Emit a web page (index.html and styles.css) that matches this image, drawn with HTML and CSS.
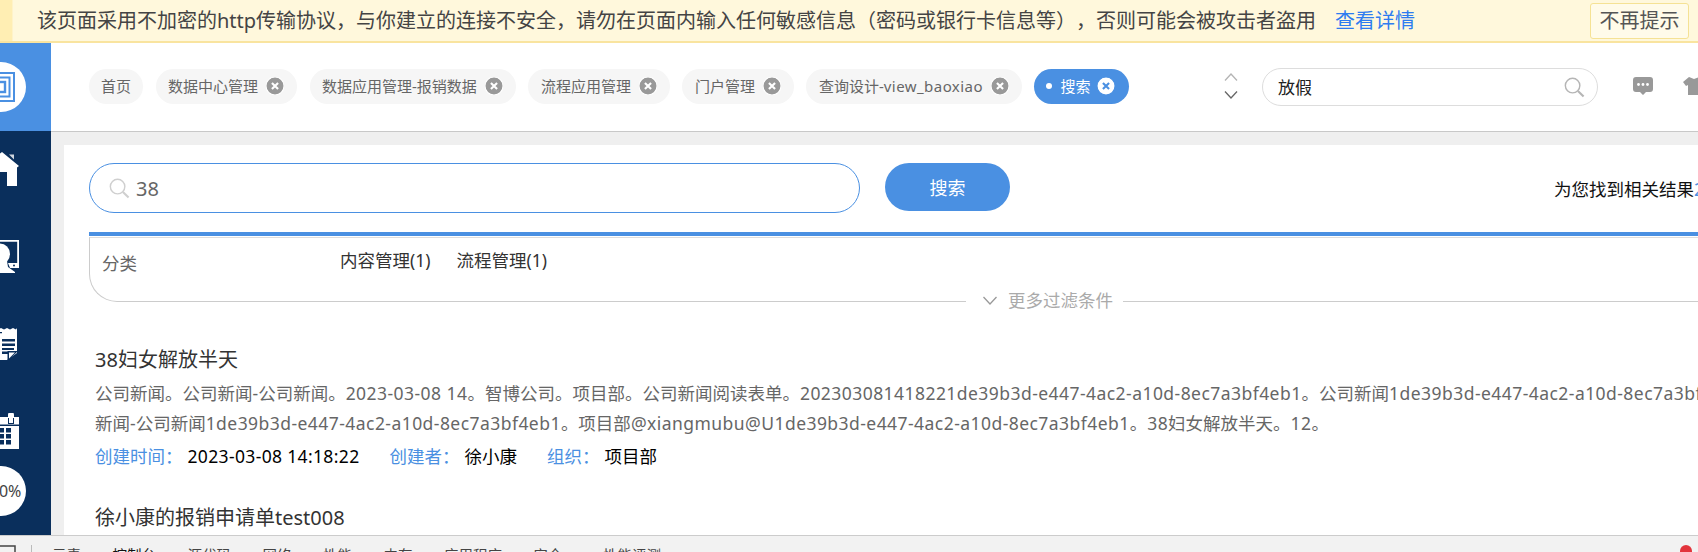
FILE: index.html
```html
<!DOCTYPE html>
<html lang="zh-CN">
<head>
<meta charset="utf-8">
<title>搜索</title>
<link rel="stylesheet" href="styles.css">
</head>
<body>
<svg class="defs" width="0" height="0" aria-hidden="true">
  <symbol id="close" viewBox="0 0 17 17"><circle cx="8.5" cy="8.5" r="8.5" fill="currentColor"/><path d="M5.6 5.6l5.8 5.8M11.4 5.6l-5.8 5.8" class="close-x"/></symbol>
  <symbol id="lens" viewBox="0 0 22 22"><circle cx="9" cy="9" r="7.6" fill="none" stroke="currentColor" stroke-width="1.5"/><path d="M14.6 14.6L20.5 20.5" stroke="currentColor" stroke-width="2.2" fill="none"/></symbol>
</svg>
<div class="banner">
  <span class="banner-strip"></span>
  <p class="banner-text">该页面采用不加密的http传输协议，与你建立的连接不安全，请勿在页面内输入任何敏感信息（密码或银行卡信息等），否则可能会被攻击者盗用</p>
  <a class="banner-link">查看详情</a>
  <button class="banner-btn">不再提示</button>
</div>
<div class="app">
  <aside class="sidebar">
    <div class="logo-area">
      <div class="logo-circle">
        <svg width="50" height="50" viewBox="0 0 50 50"><g fill="none" stroke="#4a90e2"><rect x="10" y="11" width="28" height="28" stroke-width="2"/><rect x="14.5" y="15.5" width="19" height="19" stroke-width="2"/><rect x="19" y="20" width="10" height="10" stroke-width="2.4"/></g></svg>
      </div>
    </div>
    <nav class="side-nav">
      <svg class="side-icon" viewBox="0 0 36 36"><path fill="#fff" d="M19 0L36 14L34 15.500V34H24V20H10V34H0V15Z"/><path fill="#0a2f5c" d="M24 1h8v7L24 2z"/><path fill="#cfd6df" d="M26 2.500h5v5z"/></svg>
      <svg class="side-icon" viewBox="0 0 36 36"><path fill="none" stroke="#fff" stroke-width="1.800" d="M8 1.900H35.100V28"/><ellipse cx="17" cy="15" rx="10" ry="10.500" fill="#fff"/><path fill="#fff" d="M0 22H24L25 28L32 33V34H0Z"/><path fill="#fff" d="M25 24H36V29H27z"/><circle cx="31" cy="26.500" r="1" fill="#0a2f5c"/></svg>
      <svg class="side-icon" viewBox="0 0 36 36"><path fill="#fff" d="M0 2l3 1.500 3-1.500 3 1.500 3-1.500 3 1.500 3-1.500 3 1.500 3-1.500 3 1.500 3-1.500 3 1.500 1-1.500v25L24 34H0z"/><path fill="#0a2f5c" d="M0 6h19v1.200H0zM19 13h13v2.400H19zM19 17.500h13v2.400H19zM19 22h12v2H19zM19 25.500h8v2.400H19z"/><path fill="#0a2f5c" d="M35 25L25.500 34h-1V25z"/><path fill="#fff" d="M26 26.500h6L26 32.500z"/></svg>
      <svg class="side-icon" viewBox="0 0 36 36"><path fill="#fff" d="M0 4h25V2a3 3 0 0 1 6 0v2h5v32H0z"/><path fill="#0a2f5c" d="M25 5h1v5h4V5h1v6h-6zM0 11.500h36v1.500H0z"/><path fill="#0a2f5c" d="M9 15h5v4.500H9zM16 15h5v4.500h-5zM23 15h5v4.500h-5zM9 21h5v4.500H9zM16 21h5v4.500h-5zM23 21h5v4.500h-5zM9 27h5v4.500H9zM16 27h5v4.500h-5zM23 27h5v4.500h-5z"/></svg>
      <div class="progress"><span>100%</span></div>
    </nav>
  </aside>
  <main class="main">
    <header class="topbar">
      <div class="tabs">
        <span class="tab tab-home"><span class="tab-label">首页</span></span>
        <span class="tab"><span class="tab-label">数据中心管理</span><svg class="tab-x"><use href="#close"/></svg></span>
        <span class="tab"><span class="tab-label">数据应用管理-报销数据</span><svg class="tab-x"><use href="#close"/></svg></span>
        <span class="tab"><span class="tab-label">流程应用管理</span><svg class="tab-x"><use href="#close"/></svg></span>
        <span class="tab"><span class="tab-label">门户管理</span><svg class="tab-x"><use href="#close"/></svg></span>
        <span class="tab"><span class="tab-label">查询设计-<span class="lat">view_baoxiao</span></span><svg class="tab-x"><use href="#close"/></svg></span>
        <span class="tab tab-active"><i class="tab-dot"></i><span class="tab-label">搜索</span><svg class="tab-x"><use href="#close"/></svg></span>
      </div>
      <div class="scroller">
        <svg width="14" height="8" viewBox="0 0 14 8"><path d="M1 7.500L7 1l6 6.500" fill="none" stroke="#b4b4b4" stroke-width="1.300"/></svg>
        <svg width="14" height="8" viewBox="0 0 14 8"><path d="M1 .5L7 7l6-6.500" fill="none" stroke="#666" stroke-width="1.300"/></svg>
      </div>
      <div class="top-search">
        <span class="top-search-text">放假</span>
        <svg class="top-search-icon"><use href="#lens"/></svg>
      </div>
      <svg class="msg-icon" width="20" height="18" viewBox="0 0 20 18"><path fill="#999" d="M3 0h14a3 3 0 0 1 3 3v9a3 3 0 0 1-3 3h-4l-3 3-3-3H3a3 3 0 0 1-3-3V3a3 3 0 0 1 3-3z"/><circle cx="5.500" cy="7.500" r="1.400" fill="#fff"/><circle cx="10" cy="7.500" r="1.400" fill="#fff"/><circle cx="14.500" cy="7.500" r="1.400" fill="#fff"/></svg>
      <svg class="shirt-icon" width="22" height="18" viewBox="0 0 22 18"><path fill="#999" d="M6 0l5 2 5-2 6 5-3 4-2-1v10H5V8L3 9 0 5z"/></svg>
    </header>
    <section class="canvas">
      <div class="card">
        <div class="search-row">
          <div class="search-box">
            <svg class="search-box-icon"><use href="#lens"/></svg>
            <span class="search-box-text">38</span>
          </div>
          <button class="search-btn">搜索</button>
          <span class="found">为您找到相关结果<b class="found-num">2</b>条</span>
        </div>
        <div class="filter">
          <div class="filter-box">
            <span class="filter-label">分类</span>
            <span class="filter-val">内容管理(1)</span>
            <span class="filter-val">流程管理(1)</span>
            <div class="more">
              <svg width="14" height="9" viewBox="0 0 14 9"><path d="M.5 1L7 8l6.500-7" fill="none" stroke="#999" stroke-width="1.300"/></svg>
              <span>更多过滤条件</span>
            </div>
          </div>
        </div>
        <article class="result">
          <h3 class="result-title">38妇女解放半天</h3>
          <p class="result-desc">公司新闻。公司新闻-公司新闻。<span class="lat">2023-03-08 14</span>。智博公司。项目部。公司新闻阅读表单。<span class="lat">202303081418221de39b3d-e447-4ac2-a10d-8ec7a3bf4eb1</span>。公司新闻<span class="lat">1de39b3d-e447-4ac2-a10d-8ec7a3bf4eb1</span>。公司</p>
          <p class="result-desc">新闻-公司新闻<span class="lat">1de39b3d-e447-4ac2-a10d-8ec7a3bf4eb1</span>。项目部<span class="lat">@xiangmubu@U1de39b3d-e447-4ac2-a10d-8ec7a3bf4eb1</span>。<span class="lat">38</span>妇女解放半天。<span class="lat">12</span>。</p>
          <div class="meta">
            <span class="meta-key">创建时间：</span><span class="meta-val lat-date">2023-03-08 14:18:22</span>
            <span class="meta-key">创建者：</span><span class="meta-val">徐小康</span>
            <span class="meta-key">组织：</span><span class="meta-val">项目部</span>
          </div>
        </article>
        <article class="result">
          <h3 class="result-title">徐小康的报销申请单test008</h3>
        </article>
      </div>
    </section>
  </main>
</div>
<footer class="devtools">
  <svg class="dev-icon" width="16" height="14" viewBox="0 0 16 14"><path d="M0 1h15v13" fill="none" stroke="#444" stroke-width="1.500"/></svg>
  <i class="dev-sep"></i>
  <span class="dev-tab">元素</span>
  <span class="dev-tab dev-tab-on">控制台</span>
  <span class="dev-tab">源代码</span>
  <span class="dev-tab">网络</span>
  <span class="dev-tab">性能</span>
  <span class="dev-tab">内存</span>
  <span class="dev-tab">应用程序</span>
  <span class="dev-tab">安全</span>
  <span class="dev-tab dev-tab-last">性能评测</span>
  <i class="dev-alert"></i>
</footer>
</body>
</html>
```

FILE: styles.css
```css
* { box-sizing: border-box; }
html, body { margin: 0; padding: 0; }
body {
  width: 1698px;
  height: 552px;
  overflow: hidden;
  background: #fff;
  color: #333;
  font-family: "Noto Sans", "Noto Sans CJK SC", sans-serif;
  text-spacing-trim: space-all;
  display: flex;
  flex-direction: column;
}
.defs { position: absolute; }
p, h3 { margin: 0; font-weight: 400; }
.lat { letter-spacing: .45px; }
.lat-date { letter-spacing: .35px; }

/* security banner */
.banner {
  flex: 0 0 43px;
  display: flex;
  align-items: center;
  background: #fff8dc;
  border-bottom: 2px solid #f9e49f;
  font-size: 20px;
  line-height: 28px;
  color: #444;
  white-space: nowrap;
}
.banner-strip {
  width: 13px;
  height: 100%;
  background: #ffeeb3;
  border-right: 1px solid #fff3c9;
}
.banner-text { margin-left: 24px; }
.banner-link { margin-left: 19px; color: #2e7cf0; }
.banner-btn {
  margin-left: auto;
  margin-right: 9px;
  width: 99px;
  height: 36px;
  padding: 0;
  font: inherit;
  color: #555;
  background: #fffbe9;
  border: 1px solid #f5e294;
  border-radius: 3px;
}

.app { flex: 0 0 492px; display: flex; min-height: 0; }

/* left rail */
.sidebar {
  flex: 0 0 51px;
  background: #0a2f5c;
  overflow: hidden;
  display: flex;
  flex-direction: column;
}
.logo-area {
  flex: 0 0 88px;
  background: #4a90e2;
  display: flex;
  align-items: center;
  justify-content: flex-end;
  padding-right: 25px;
}
.logo-circle {
  flex: 0 0 50px;
  width: 50px;
  height: 50px;
  border-radius: 50%;
  background: #fff;
  overflow: hidden;
}
.logo-circle svg { display: block; }
.side-nav {
  display: flex;
  flex-direction: column;
  align-items: flex-end;
  padding: 21px 32px 0 0;
}
.side-icon {
  flex: 0 0 36px;
  width: 36px;
  height: 36px;
  margin-bottom: 51px;
}
.side-icon:nth-child(4) { margin-bottom: 17px; }
.progress {
  flex: 0 0 50px;
  width: 50px;
  margin-right: -7px;
  border-radius: 50%;
  background: #fff;
  color: #444;
  font-size: 16px;
  white-space: nowrap;
  display: flex;
  align-items: center;
  justify-content: center;
}

.main {
  flex: 0 0 1647px;
  display: flex;
  flex-direction: column;
  overflow: hidden;
}

/* top bar */
.topbar {
  flex: 0 0 89px;
  display: flex;
  align-items: center;
  padding: 0 0 2px 38px;
  border-bottom: 1px solid #c8c8c8;
  overflow: hidden;
}
.tabs {
  flex: 0 0 1135px;
  display: flex;
  gap: 12.500px;
}
.tab {
  display: flex;
  align-items: center;
  height: 35px;
  padding: 0 13px 0 12.500px;
  border-radius: 17.500px;
  background: #f6f6f6;
  color: #666;
  font-size: 15px;
  white-space: nowrap;
}
.tab-label { padding-bottom: 2px; }
.tab-home { padding: 0 12px; }
.tab-x {
  flex: 0 0 18px;
  width: 18px;
  height: 18px;
  margin-left: 8px;
  color: #999;
  stroke: #fff;
}
.close-x { fill: none; stroke-width: 2; }
.tab-active { background: #4a90e2; color: #fff; padding: 0 14px 0 12px; }
.tab-active .tab-x { color: #fff; stroke: #4a90e2; margin-left: 7px; }
.tab-dot {
  width: 6px;
  height: 6px;
  margin-right: 8px;
  border-radius: 50%;
  background: #fff;
}
.scroller {
  flex: 0 0 14px;
  display: flex;
  flex-direction: column;
  gap: 10px;
}
.scroller svg { display: block; }
.top-search {
  flex: 0 0 336px;
  height: 38px;
  margin: 2px 0 0 24px;
  padding: 0 12px 0 15px;
  display: flex;
  align-items: center;
  justify-content: space-between;
  border: 1px solid #ddd;
  border-radius: 19px;
  color: #222;
  font-size: 17px;
}
.top-search-text { padding-bottom: 2px; }
.top-search-icon { width: 21px; height: 21px; color: #b5b5b5; }
.msg-icon { flex: 0 0 20px; margin-left: 35px; }
.shirt-icon { flex: 0 0 22px; margin-left: 30px; }

/* content */
.canvas {
  flex: 1 1 0;
  min-height: 0;
  background: #efefef;
  padding: 13px 0 0 13px;
  overflow: hidden;
}
.card {
  width: 1700px;
  height: 100%;
  background: #fff;
  padding: 18px 0 0 25px;
  overflow: hidden;
}
.search-row {
  display: flex;
  align-items: center;
  height: 50px;
  white-space: nowrap;
}
.search-box {
  flex: 0 0 771px;
  height: 50px;
  display: flex;
  align-items: center;
  padding-left: 19px;
  border: 1px solid #4a90e2;
  border-radius: 25px;
}
.search-box-icon { width: 21px; height: 21px; color: #cfcfcf; }
.search-box-text { margin-left: 6px; font-size: 20px; color: #666; }
.search-btn {
  flex: 0 0 125px;
  height: 48px;
  margin: 0 0 2px 25px;
  border: 0;
  border-radius: 24px;
  background: #4a90e2;
  color: #fff;
  font: inherit;
  font-size: 18px;
}
.found { margin-left: 544px; font-size: 17.500px; color: #111; }
.found-num { font-weight: 400; color: #4a90e2; }

.filter {
  margin-top: 19px;
  padding-top: 1px;
  border-top: 4px solid #4a90e2;
}
.filter-box {
  position: relative;
  height: 65px;
  display: flex;
  padding-left: 12px;
  border: solid #ccc;
  border-width: 1px 0 1px 1px;
  border-top-color: #ddd;
  border-bottom-left-radius: 28px;
  font-size: 17.500px;
  line-height: 26px;
  color: #333;
}
.filter-label { width: 238px; margin-top: 12px; color: #666; }
.filter-val { margin: 9px 26px 0 0; }
.more {
  position: absolute;
  left: 876px;
  bottom: -12px;
  width: 157px;
  height: 26px;
  padding-left: 17px;
  display: flex;
  align-items: center;
  gap: 11px;
  background: #fff;
  color: #aaa;
}

.result { padding-left: 6px; }
.filter + .result { margin-top: 43px; }
.result + .result { margin-top: 32px; }
.result-title { font-size: 20px; line-height: 30px; color: #333; white-space: nowrap; }
.result-desc {
  margin-top: 0;
  font-size: 17.500px;
  line-height: 30px;
  color: #666;
  white-space: nowrap;
}
.result-title + .result-desc { margin-top: 3px; }
.meta {
  display: flex;
  margin-top: 3px;
  font-size: 17.500px;
  line-height: 30px;
  white-space: nowrap;
}
.meta-key { color: #4a90e2; }
.meta-val { margin: 0 30px 0 5px; color: #000; }

/* devtools strip */
.devtools {
  flex: 0 0 17px;
  display: flex;
  gap: 31.500px;
  padding-top: 9px;
  background: #f2f2f2;
  border-top: 1px solid #ccc;
  overflow: hidden;
  font-size: 14.500px;
  line-height: 20px;
  color: #444;
  white-space: nowrap;
}
.dev-icon { flex: 0 0 16px; margin-right: -17px; }
.dev-sep {
  flex: 0 0 1px;
  height: 20px;
  background: #bbb;
  margin-right: -11px;
}
.dev-tab-on { color: #111; }
.dev-tab-last { margin-left: 9px; }
.dev-alert {
  flex: 0 0 12px;
  height: 12px;
  margin-left: auto;
  margin-right: 6px;
  border-radius: 50%;
  background: #e2343c;
}
```
